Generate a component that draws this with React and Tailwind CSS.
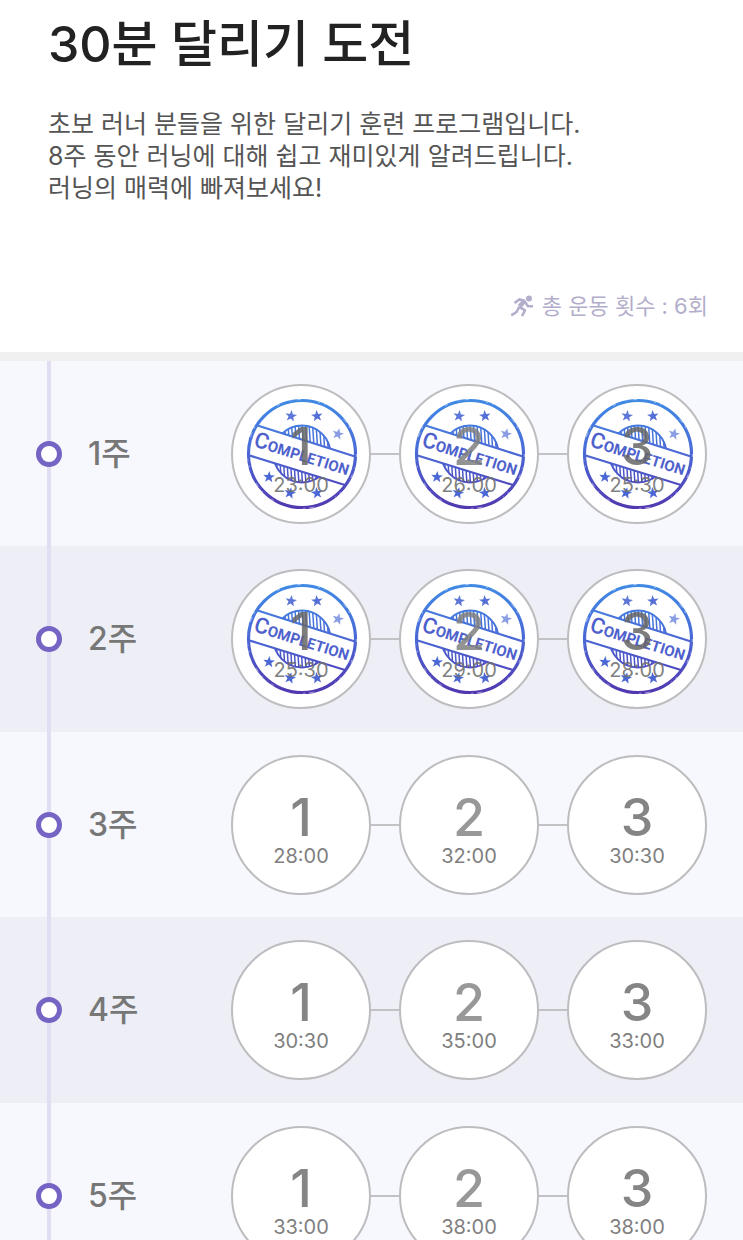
const weeks = [
  { week: 1, times: ["23:00", "26:00", "25:30"], done: true },
  { week: 2, times: ["25:30", "29:00", "28:00"], done: true },
  { week: 3, times: ["28:00", "32:00", "30:30"] },
  { week: 4, times: ["30:30", "35:00", "33:00"] },
  { week: 5, times: ["33:00", "38:00", "38:00"] },
];

const STAR =
  "M0 -6 L1.5 -1.9 L5.8 -1.9 L2.4 0.8 L3.6 5 L0 2.6 L-3.6 5 L-2.4 0.8 L-5.8 -1.9 L-1.5 -1.9 Z";
const STARS = [
  [-11, -38, 8, 0.9],
  [15, -38, -6, 0.95],
  [36, -20, 14, 0.65],
  [-33, 23, 4, 1],
  [-12, 39, 12, 1],
  [15, 39, -8, 1],
];
const HATCH = [-26, -22.5, -19, -15.5, -12, -8.5, -5, -1.5, 2, 5.5, 9, 12.5, 16, 19.5, 23, 26.5];

function Stamp({ id }) {
  const paint = `url(#ink-${id})`;
  return (
    <svg
      viewBox="-59 -58 116 116"
      className="pointer-events-none absolute inset-0 m-auto size-[116px]"
      role="img"
      aria-label="Completion"
    >
      <defs>
        <linearGradient id={`ink-${id}`} gradientUnits="userSpaceOnUse" x1="0" y1="-56" x2="0" y2="56">
          <stop offset="0" stopColor="#3f8be4" />
          <stop offset="0.45" stopColor="#4a6cd8" />
          <stop offset="1" stopColor="#5136ae" />
        </linearGradient>
        <clipPath id={`seal-${id}`}>
          <circle r="29" />
        </clipPath>
        <clipPath id={`sides-${id}`}>
          <path d="M-58 -58H58V4L-58 -33Z M-58 0L58 36V58H-58Z" />
        </clipPath>
      </defs>
      <g fill="none" stroke={paint}>
        <circle r="53.5" strokeWidth="3.2" />
        <path d="M-46 -29L53 2.5M-54 1L43 31" strokeWidth="2.2" />
        <g clipPath={`url(#sides-${id})`}>
          <circle r="28.5" strokeWidth="2" />
          <g clipPath={`url(#seal-${id})`} strokeWidth="1.5">
            {HATCH.map((x) => (
              <path key={x} d={`M${x - 2} -30L${x + 2} 30`} />
            ))}
          </g>
        </g>
      </g>
      <circle
        r="54.4"
        fill="none"
        stroke="#fff"
        strokeOpacity="0.5"
        strokeWidth="1"
        strokeDasharray="3 11 1 6 4 17 2 5 1 23 5 4 2 31"
      />
      {STARS.map(([x, y, r, opacity]) => (
        <path key={`${x},${y}`} fill={paint} opacity={opacity} d={STAR} transform={`translate(${x} ${y}) rotate(${r})`} />
      ))}
      <text
        transform="rotate(17.3)"
        textAnchor="middle"
        y="7"
        fill="#4f62cc"
        className="font-['Roboto',sans-serif] text-[15px] font-bold"
      >
        <tspan className="text-[22px] font-medium">C</tspan>OMPLETION
      </text>
    </svg>
  );
}

function Runner() {
  return (
    <svg viewBox="0 0 24 24" className="size-6" fill="none" stroke="currentColor" strokeLinejoin="round" aria-hidden="true">
      <circle cx="19" cy="4.6" r="3" fill="currentColor" stroke="none" />
      <path d="M4.5 9L9.5 5.4L14 6.4L18 12.2H23" strokeWidth="2.6" />
      <path d="M14 7.5L9.5 12.5" strokeWidth="4.6" />
      <path d="M9.5 12.5L6.5 18L1.2 21.4" strokeWidth="2.6" />
      <path d="M9.8 13.2L15 16.4L12 22" strokeWidth="2.6" />
    </svg>
  );
}

function Session({ week, number, time, done }) {
  const tone = number === 2 ? "text-[#989898]" : "text-[#858585]";
  const stampedTone = number === 2 ? "text-[#808080]/85" : "text-[#666]/85";
  return (
    <li className="flex items-center before:h-0.5 before:w-7 before:bg-[#c2c2c4] first:before:hidden">
      <button
        type="button"
        className="relative flex size-[140px] flex-col items-center rounded-full border-2 border-[#bdbdbf] bg-white pt-[35px]"
      >
        {done && <Stamp id={`${week}-${number}`} />}
        <span className={`relative text-[52px] leading-[52px] font-medium ${done ? stampedTone : tone}`}>{number}</span>
        <span className={`relative text-[20px] leading-[24px] ${done ? "text-[#707070]/90" : "text-[#808080]"}`}>{time}</span>
      </button>
    </li>
  );
}

export default function App() {
  return (
    <main className="bg-white font-['Inter','Noto_Sans_CJK_KR',sans-serif]">
      <header className="pt-3 pr-[35px] pb-[30px] pl-12">
        <h1 className="text-[50px] leading-[64px] font-medium text-[#222]">30분 달리기 도전</h1>
        <p className="mt-8 text-[25px] leading-[32px] text-[#555]">
          초보 러너 분들을 위한 달리기 훈련 프로그램입니다.
          <br />
          8주 동안 러닝에 대해 쉽고 재미있게 알려드립니다.
          <br />
          러닝의 매력에 빠져보세요!
        </p>
        <p className="mt-[86px] flex items-center justify-end gap-2 text-[22px] leading-[32px] text-[#b3aecb]">
          <Runner />총 운동 횟수 : 6회
        </p>
      </header>
      <ol className="border-t-9 border-[#f0f0f0]">
        {weeks.map(({ week, times, done }) => (
          <li key={week} className="flex h-[185px] items-center bg-[#f7f8fd] pr-9 even:h-[186px] even:bg-[#edeef6]">
            <div className="ml-9 flex w-[26px] flex-col items-center self-stretch">
              <span className="w-1 flex-1 bg-[#e1ddf3]" />
              <span className="size-[26px] rounded-full border-5 border-[#7664c4] bg-white" />
              <span className="w-1 flex-1 bg-[#e1ddf3]" />
            </div>
            <h2 className="ml-[26px] flex-1 text-[32px] font-medium text-[#777]">{week}주</h2>
            <ul className="flex">
              {times.map((time, i) => (
                <Session key={i} week={week} number={i + 1} time={time} done={done} />
              ))}
            </ul>
          </li>
        ))}
      </ol>
    </main>
  );
}
